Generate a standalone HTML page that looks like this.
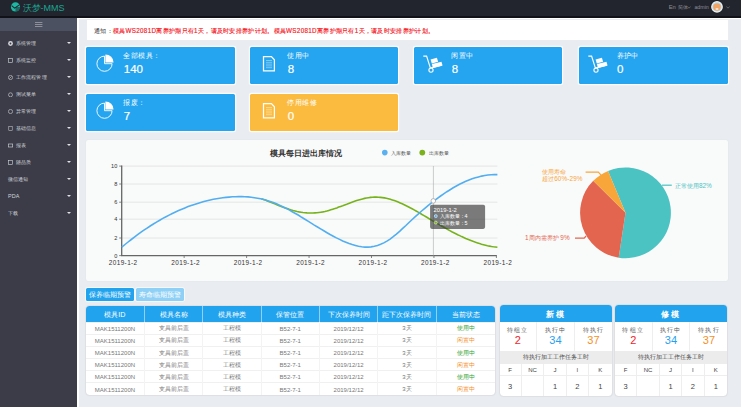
<!DOCTYPE html>
<html><head><meta charset="utf-8">
<style>
*{margin:0;padding:0;box-sizing:border-box;}
html,body{width:741px;height:407px;overflow:hidden;}
body{position:relative;background:#e9ecf0;font-family:"Liberation Sans",sans-serif;color:#333;}
.abs{position:absolute;}
#hdr{left:0;top:0;width:741px;height:15.8px;background:#23252e;}
#hdrline{left:0;top:15.8px;width:741px;height:1.8px;background:#111217;}
#side{left:0;top:17.6px;width:77px;height:390px;background:#3b3c48;}
#ham{left:0;top:17.6px;width:77px;height:13.3px;background:#4c5162;}
#wl{left:76.9px;top:17.6px;width:2.2px;height:390px;background:#fff;}
#wt{left:76.9px;top:17.6px;width:664.1px;height:1.9px;background:#fff;}
.mi{position:absolute;left:0;width:77px;height:17px;color:#d2d4da;font-size:5.4px;letter-spacing:0.15px;line-height:17px;}
.mi .ic{position:absolute;left:8px;top:5.5px;width:5px;height:5px;}
.mi .tx{position:absolute;left:15.8px;top:0;white-space:nowrap;}
.mi .ar{position:absolute;left:67.1px;top:7px;width:0;height:0;border-left:2.3px solid transparent;border-right:2.3px solid transparent;border-top:2.8px solid #e2e3e7;}
.card{position:absolute;width:149px;height:37.6px;background:#25a5ef;border-radius:1.5px;box-shadow:0 0 0 1.2px rgba(255,255,255,.92);color:#fff;}
.card .lb{position:absolute;left:37.3px;top:4.5px;font-size:7px;letter-spacing:0.45px;line-height:9px;white-space:nowrap;}
.card .nm{position:absolute;left:37.8px;top:15.7px;font-size:11.5px;line-height:14px;-webkit-text-stroke:0.2px #fff;}
.card svg{position:absolute;left:0;top:0;}
#notice{left:86.5px;top:20.4px;width:641.5px;height:19.6px;background:#fff;font-size:6.3px;letter-spacing:0.3px;line-height:21.5px;padding-left:7.5px;white-space:nowrap;overflow:hidden;color:#333;}
#notice span{color:#f5161e;-webkit-text-stroke:0.15px #f5161e;}
#chart{left:86.4px;top:140px;width:641.2px;height:140.6px;background:#f9fafa;border-radius:2px;box-shadow:0 0 1.5px rgba(0,0,0,.08);}
.btn{position:absolute;top:288.2px;height:13.1px;font-size:6.8px;line-height:13px;color:#fff;text-align:center;border-radius:1.5px;box-shadow:0 0 0 0.8px rgba(255,255,255,.8);}
#tbl{left:86px;top:305.5px;width:408.6px;height:89.9px;background:#fff;border-radius:3.5px;overflow:hidden;box-shadow:0 0 1.5px rgba(0,0,0,.25);}
#tbl table{border-collapse:collapse;width:100%;table-layout:fixed;}
#tbl th{height:16.8px;padding-top:2.2px;background:#22a3ee;color:#fff;font-weight:normal;font-size:7.2px;border-right:1px solid rgba(255,255,255,.5);}
#tbl td{height:12.1px;padding-top:1px;font-size:6px;color:#777;text-align:center;border-top:0.7px solid #f0f0f0;border-right:0.7px solid #f3f3f3;}
#tbl th:last-child,#tbl td:last-child{border-right:none;}
.g{color:#2ea12e !important;} .o{color:#f5902a !important;}
.pnl{position:absolute;top:304.8px;width:112px;height:91.2px;background:#fff;border-radius:3.5px;overflow:hidden;box-shadow:0 0 1.5px rgba(0,0,0,.25);}
.pnl .ph{position:absolute;left:0;top:0;width:100%;height:17px;background:#22a3ee;color:#fff;font-weight:bold;font-size:8px;line-height:19px;text-align:center;letter-spacing:2px;}
.pnl .c3{position:absolute;top:17px;height:29px;width:37.6px;text-align:center;}
.pnl .c3 .l{font-size:6px;color:#555;letter-spacing:1.2px;margin-top:4px;line-height:8px;}
.pnl .c3 .n{font-size:11px;line-height:13px;}
.pnl .gray{position:absolute;left:0;top:46.2px;width:100%;height:13.2px;background:#ececec;font-size:6px;line-height:13px;text-align:center;color:#444;}
.pnl .c5{position:absolute;width:22.4px;text-align:center;font-size:6px;color:#444;}
</style></head>
<body>
<div id="hdr" class="abs"></div>
<div id="hdrline" class="abs"></div>
<!-- logo -->
<svg class="abs" style="left:0;top:0" width="24" height="16" viewBox="0 0 24 16">
<circle cx="15.5" cy="6.9" r="4.6" fill="#1cb8a3"/>
<path d="M15.5 6.9 L20.1 6.9 A4.6 4.6 0 0 1 15.5 11.5 Z" fill="#23252e" opacity=".55"/>
<path d="M11.6 5.6 L14.6 8.1 L19.4 4.9" stroke="#23252e" stroke-width="1.1" fill="none"/>
</svg>
<div class="abs" style="left:22.5px;top:2.5px;font-size:9px;line-height:10px;color:#1aa592;white-space:nowrap;">沃梦-MMS</div>
<!-- top right -->
<div class="abs" style="left:668.7px;top:3.4px;font-size:5.8px;line-height:8px;color:#8c8f96;white-space:nowrap;">En<span style="font-size:4.6px;margin-left:2.6px;">简体</span></div>
<svg class="abs" style="left:686.5px;top:5.6px" width="4" height="3"><path d="M0.4 0.5 L2 2.2 L3.6 0.5" stroke="#84878e" stroke-width="0.6" fill="none"/></svg>
<div class="abs" style="left:694.4px;top:3.4px;font-size:5.3px;line-height:8px;color:#8c8f96;">admin</div>
<svg class="abs" style="left:710px;top:0" width="14" height="14" viewBox="0 0 14 14">
<circle cx="7" cy="6.9" r="6.3" fill="#111"/>
<circle cx="7" cy="6.9" r="5.9" fill="#eef6fb"/>
<circle cx="7" cy="6.9" r="4.9" fill="#bfe0f4"/>
<ellipse cx="7" cy="7" rx="3.9" ry="3.7" fill="#f0a566"/>
<ellipse cx="7" cy="9" rx="1.6" ry="1.1" fill="#f7e6d6"/>
</svg>
<svg class="abs" style="left:725.5px;top:5.6px" width="4" height="3"><path d="M0.4 0.5 L2 2.2 L3.6 0.5" stroke="#84878e" stroke-width="0.6" fill="none"/></svg>

<div id="side" class="abs"></div>
<div id="ham" class="abs"></div>
<svg class="abs" style="left:35px;top:22px" width="8" height="5"><rect x="0" y="0" width="7.4" height="0.7" fill="#a9acb5"/><rect x="0" y="2" width="7.4" height="0.7" fill="#a9acb5"/><rect x="0" y="4" width="7.4" height="0.7" fill="#a9acb5"/></svg>

<div class="mi" style="top:35.2px"><svg class="ic" viewBox="0 0 5 5"><circle cx="2.5" cy="2.5" r="2.4" fill="#d5d7dc"/><circle cx="2.5" cy="2.5" r="0.9" fill="#3b3c48"/></svg><span class="tx">系统管理</span><i class="ar"></i></div>
<div class="mi" style="top:52.2px"><svg class="ic" viewBox="0 0 5 5"><rect x="0.4" y="0.4" width="4.2" height="4.2" stroke="#d5d7dc" stroke-width="0.6" fill="none"/></svg><span class="tx">系统监控</span><i class="ar"></i></div>
<div class="mi" style="top:69.2px"><svg class="ic" viewBox="0 0 5 5"><circle cx="2.5" cy="2.5" r="2.1" stroke="#d5d7dc" stroke-width="0.6" fill="none"/><path d="M1.5 3.5 L3.5 1.5" stroke="#d5d7dc" stroke-width="0.6"/></svg><span class="tx">工作流程管理</span><i class="ar"></i></div>
<div class="mi" style="top:86.2px"><svg class="ic" viewBox="0 0 5 5"><circle cx="2.5" cy="2.8" r="2" stroke="#d5d7dc" stroke-width="0.6" fill="none"/></svg><span class="tx">测试菜单</span><i class="ar"></i></div>
<div class="mi" style="top:103.2px"><svg class="ic" viewBox="0 0 5 5"><circle cx="2.5" cy="2.5" r="2.1" stroke="#d5d7dc" stroke-width="0.6" fill="none"/></svg><span class="tx">异常管理</span><i class="ar"></i></div>
<div class="mi" style="top:120.2px"><svg class="ic" viewBox="0 0 5 5"><rect x="0.8" y="0.4" width="3.4" height="4.2" stroke="#d5d7dc" stroke-width="0.5" fill="none"/></svg><span class="tx">基础信息</span><i class="ar"></i></div>
<div class="mi" style="top:137.2px"><svg class="ic" viewBox="0 0 5 5"><rect x="0.3" y="1" width="4.4" height="3" stroke="#d5d7dc" stroke-width="0.6" fill="none"/></svg><span class="tx">报表</span><i class="ar"></i></div>
<div class="mi" style="top:154.2px"><svg class="ic" viewBox="0 0 5 5"><rect x="0.6" y="0.6" width="3.8" height="3.8" stroke="#d5d7dc" stroke-width="0.6" fill="none"/></svg><span class="tx">随品质</span><i class="ar"></i></div>
<div class="mi" style="top:171.2px"><span class="tx" style="left:8px">微信通知</span><i class="ar"></i></div>
<div class="mi" style="top:188.2px"><span class="tx" style="left:8px">PDA</span><i class="ar"></i></div>
<div class="mi" style="top:205.2px"><span class="tx" style="left:8px">下载</span><i class="ar"></i></div>

<div id="wl" class="abs"></div>
<div id="wt" class="abs"></div>

<div id="notice" class="abs">通知：<span>模具WS2081D离养护期只有1天，请及时安排养护计划。模具WS2081D离养护期只有1天，请及时安排养护计划。</span></div>

<!-- cards -->
<div class="card" style="left:86px;top:46.5px;">
<svg width="40" height="38"><path d="M104.5 55.6 A7.6 7.6 0 1 0 112.1 63.2 L104.5 63.2 Z" transform="translate(-86,-46.5)" stroke="#fff" stroke-width="0.9" fill="none"/><path d="M105.4 53.9 A8.2 8.2 0 0 1 113.6 62.1 L105.4 62.1 Z" transform="translate(-86,-46.5)" fill="#fff"/></svg>
<div class="lb">全部模具：</div><div class="nm">140</div></div>
<div class="card" style="left:250px;top:46.5px;width:148.4px;">
<svg width="40" height="38"><g transform="translate(-250,-46.5)"><path d="M263.5 56.1 L271.4 56.1 L274.4 59.3 L274.4 70.4 L263.5 70.4 Z" stroke="#fff" stroke-width="1.25" fill="none"/><path d="M266 60 H272 M266 61.8 H272 M266 63.6 H272 M266 65.4 H272 M266 67.2 H272" stroke="#fff" stroke-width="0.5" opacity=".8"/></g></svg>
<div class="lb">使用中</div><div class="nm">8</div></div>
<div class="card" style="left:414px;top:46.5px;width:148.4px;">
<svg width="40" height="38"><g transform="translate(-414,-46.5)"><path d="M423.3 55.6 H426.6 L430.4 67.6 L442 64.6" stroke="#fff" stroke-width="1.15" fill="none"/><circle cx="431" cy="69.6" r="2.1" stroke="#fff" stroke-width="1.1" fill="none"/><path d="M430.6 58.9 L436.9 57.3 L438.1 61.3 L431.8 63 Z" fill="#fff"/><path d="M431.9 63.6 L441.5 61.2 L442.5 65 L432.9 67.4 Z" fill="#fff"/></g></svg>
<div class="lb">闲置中</div><div class="nm">8</div></div>
<div class="card" style="left:579.3px;top:46.5px;width:148.7px;">
<svg width="40" height="38"><g transform="translate(-414,-46.5)"><path d="M423.3 55.6 H426.6 L430.4 67.6 L442 64.6" stroke="#fff" stroke-width="1.15" fill="none"/><circle cx="431" cy="69.6" r="2.1" stroke="#fff" stroke-width="1.1" fill="none"/><path d="M430.6 58.9 L436.9 57.3 L438.1 61.3 L431.8 63 Z" fill="#fff"/><path d="M431.9 63.6 L441.5 61.2 L442.5 65 L432.9 67.4 Z" fill="#fff"/></g></svg>
<div class="lb">养护中</div><div class="nm">0</div></div>
<div class="card" style="left:86px;top:93.6px;">
<svg width="40" height="38"><path d="M104.5 55.6 A7.6 7.6 0 1 0 112.1 63.2 L104.5 63.2 Z" transform="translate(-86,-46.5)" stroke="#fff" stroke-width="0.9" fill="none"/><path d="M105.4 53.9 A8.2 8.2 0 0 1 113.6 62.1 L105.4 62.1 Z" transform="translate(-86,-46.5)" fill="#fff"/></svg>
<div class="lb">报废：</div><div class="nm">7</div></div>
<div class="card" style="left:250px;top:93.6px;width:148.4px;background:#fbbb3f;">
<svg width="40" height="38"><g transform="translate(-250,-46.5)"><path d="M263.5 56.1 L271.4 56.1 L274.4 59.3 L274.4 70.4 L263.5 70.4 Z" stroke="#fff" stroke-width="1.25" fill="none"/><path d="M266 60 H272 M266 61.8 H272 M266 63.6 H272 M266 65.4 H272 M266 67.2 H272" stroke="#fff" stroke-width="0.5" opacity=".8"/></g></svg>
<div class="lb">停用维修</div><div class="nm">0</div></div>

<div id="chart" class="abs"></div>
<svg class="abs" style="left:0;top:0" width="741" height="407" viewBox="0 0 741 407" font-family="Liberation Sans, sans-serif">
<text x="306" y="155.8" font-size="7.9" font-weight="bold" fill="#333" text-anchor="middle">模具每日进出库情况</text>
<circle cx="384.8" cy="152.6" r="2.8" fill="#5ab1ef"/><text x="390.6" y="154.9" font-size="5.4" fill="#555">入库数量</text>
<circle cx="422.3" cy="152.6" r="2.9" fill="#7bb21c"/><text x="428.9" y="154.9" font-size="5.4" fill="#555">出库数量</text>
<g stroke="#e0e0e0" stroke-width="0.8">
<path d="M121.7 166.1 H497.4 M121.7 184 H497.4 M121.7 202.2 H497.4 M121.7 219.2 H497.4 M121.7 238 H497.4"/>
</g>
<path d="M121.7 165.6 V255.7 H496.8" stroke="#666" stroke-width="1.3" fill="none"/>
<g stroke="#666" stroke-width="0.8">
<path d="M119.2 166.1 H121.7 M119.2 184 H121.7 M119.2 202.2 H121.7 M119.2 219.2 H121.7 M119.2 238 H121.7 M119.2 255.6 H121.7"/>
<path d="M184.15 255.6 V258 M246.6 255.6 V258 M309.05 255.6 V258 M371.5 255.6 V258 M433.95 255.6 V258 M496.4 255.6 V258"/>
</g>
<g font-size="5.6" fill="#333" text-anchor="end"><text x="117.3" y="168.1">10</text><text x="117.3" y="186.0">8</text><text x="117.3" y="204.2">6</text><text x="117.3" y="221.2">4</text><text x="117.3" y="240.0">2</text><text x="117.3" y="257.6">0</text></g>
<g font-size="6.4" fill="#333" text-anchor="middle" letter-spacing="0.4"><text x="123.2" y="264.6">2019-1-2</text><text x="185.7" y="264.6">2019-1-2</text><text x="248.1" y="264.6">2019-1-2</text><text x="310.6" y="264.6">2019-1-2</text><text x="373.0" y="264.6">2019-1-2</text><text x="435.4" y="264.6">2019-1-2</text><text x="497.9" y="264.6">2019-1-2</text></g>
<path d="M433.4 166 V255.6" stroke="#aaa" stroke-width="0.6"/>
<path d="M261.4 198.7 L263.4 199.4 L265.4 200.1 L267.3 200.9 L269.3 201.7 L271.3 202.5 L273.3 203.3 L275.3 204.1 L277.3 204.9 L279.2 205.7 L281.2 206.5 L283.2 207.2 L285.2 207.9 L287.2 208.6 L289.2 209.3 L291.1 209.9 L293.1 210.5 L295.1 211.0 L297.1 211.5 L299.1 211.9 L301.1 212.2 L303.0 212.5 L305.0 212.7 L307.0 212.9 L309.0 213.0 L311.0 213.0 L313.0 213.0 L314.9 212.9 L316.9 212.8 L318.9 212.5 L320.9 212.2 L322.9 211.9 L324.9 211.5 L326.8 211.0 L328.8 210.4 L330.8 209.8 L332.8 209.2 L334.8 208.6 L336.8 207.9 L338.7 207.1 L340.7 206.4 L342.7 205.7 L344.7 204.9 L346.7 204.2 L348.7 203.4 L350.6 202.7 L352.6 202.0 L354.6 201.3 L356.6 200.6 L358.6 200.0 L360.6 199.4 L362.5 198.9 L364.5 198.4 L366.5 198.0 L368.5 197.7 L370.5 197.4 L372.5 197.2 L374.4 197.1 L376.4 197.1 L378.4 197.2 L380.4 197.4 L382.4 197.6 L384.4 197.9 L386.3 198.3 L388.3 198.8 L390.3 199.3 L392.3 199.9 L394.3 200.6 L396.3 201.3 L398.2 202.1 L400.2 202.9 L402.2 203.8 L404.2 204.7 L406.2 205.7 L408.2 206.7 L410.1 207.7 L412.1 208.8 L414.1 209.9 L416.1 211.0 L418.1 212.1 L420.1 213.3 L422.0 214.5 L424.0 215.6 L426.0 216.8 L428.0 218.0 L430.0 219.2 L432.0 220.4 L433.9 221.6 L435.9 222.7 L437.9 223.9 L439.9 225.1 L441.9 226.2 L443.9 227.3 L445.8 228.4 L447.8 229.5 L449.8 230.6 L451.8 231.7 L453.8 232.7 L455.8 233.7 L457.7 234.7 L459.7 235.6 L461.7 236.6 L463.7 237.5 L465.7 238.4 L467.7 239.2 L469.6 240.0 L471.6 240.8 L473.6 241.6 L475.6 242.3 L477.6 242.9 L479.6 243.6 L481.5 244.2 L483.5 244.7 L485.5 245.2 L487.5 245.7 L489.5 246.1 L491.5 246.5 L493.4 246.8 L495.4 247.0 L497.4 247.2" stroke="#76b31b" stroke-width="1.6" fill="none"/>
<path d="M121.8 247.2 L125.0 244.5 L128.1 242.0 L131.3 239.5 L134.4 237.1 L137.6 234.7 L140.7 232.4 L143.9 230.2 L147.1 228.1 L150.2 226.0 L153.4 224.0 L156.5 222.1 L159.7 220.2 L162.8 218.4 L166.0 216.7 L169.1 215.1 L172.3 213.5 L175.5 212.0 L178.6 210.5 L181.8 209.2 L184.9 207.9 L188.1 206.6 L191.2 205.5 L194.4 204.4 L197.6 203.4 L200.7 202.4 L203.9 201.5 L207.0 200.7 L210.2 200.0 L213.3 199.3 L216.5 198.7 L219.6 198.2 L222.8 197.8 L226.0 197.4 L229.1 197.1 L232.3 196.8 L235.4 196.7 L238.6 196.6 L241.7 196.6 L244.9 196.7 L248.1 196.9 L251.2 197.3 L254.4 197.7 L257.5 198.2 L260.7 198.8 L263.8 199.6 L267.0 200.4 L270.1 201.4 L273.3 202.6 L276.5 203.8 L279.6 205.2 L282.8 206.7 L285.9 208.2 L289.1 209.9 L292.2 211.7 L295.4 213.5 L298.6 215.3 L301.7 217.3 L304.9 219.2 L308.0 221.1 L311.2 223.1 L314.3 225.1 L317.5 227.0 L320.6 228.9 L323.8 230.8 L327.0 232.7 L330.1 234.5 L333.3 236.2 L336.4 237.9 L339.6 239.4 L342.7 240.9 L345.9 242.2 L349.1 243.5 L352.2 244.6 L355.4 245.5 L358.5 246.3 L361.7 246.8 L364.8 247.1 L368.0 247.1 L371.1 246.9 L374.3 246.3 L377.5 245.5 L380.6 244.3 L383.8 242.9 L386.9 241.1 L390.1 239.1 L393.2 236.7 L396.4 234.1 L399.6 231.3 L402.7 228.4 L405.9 225.5 L409.0 222.5 L412.2 219.5 L415.3 216.6 L418.5 213.8 L421.6 211.0 L424.8 208.3 L428.0 205.7 L431.1 203.2 L434.3 200.7 L437.4 198.3 L440.6 196.0 L443.7 193.8 L446.9 191.7 L450.1 189.7 L453.2 187.8 L456.4 186.0 L459.5 184.3 L462.7 182.7 L465.8 181.3 L469.0 180.0 L472.1 178.8 L475.3 177.8 L478.5 176.9 L481.6 176.1 L484.8 175.5 L487.9 175.0 L491.1 174.7 L494.2 174.6 L497.4 174.6" stroke="#52aef0" stroke-width="1.6" fill="none"/>
<circle cx="433.3" cy="200.9" r="2.3" fill="#fff" stroke="#999" stroke-width="0.7"/>
<rect x="430.1" y="204.7" width="55" height="24.2" rx="1.8" fill="rgba(50,50,50,0.64)"/>
<g font-size="5.8" fill="#fff">
<text x="433.6" y="211.9">2019-1-2</text>
<circle cx="435.8" cy="216.1" r="1.5" fill="#5ab1ef" stroke="#fff" stroke-width="0.5"/><text x="439.6" y="218.2" font-size="5.4">入库数量：4</text>
<circle cx="435.8" cy="222.6" r="1.5" fill="#7bb21c" stroke="#fff" stroke-width="0.5"/><text x="439.6" y="224.7" font-size="5.4">出库数量：5</text>
</g>
<!-- pie -->
<g transform="translate(625.5,212.8)">
<path d="M0 0 L-17.45 -41.91 A45.4 45.4 0 1 1 -6.79 44.89 Z" fill="#4cc3c3"/><path d="M0 0 L-6.79 44.89 A45.4 45.4 0 0 1 -32.27 -31.93 Z" fill="#e3654f"/><path d="M0 0 L-32.27 -31.93 A45.4 45.4 0 0 1 -17.45 -41.91 Z" fill="#f8a63a"/>
</g>
<path d="M662 185.2 H671.8" stroke="#4cc3c3" stroke-width="1.2"/>
<text x="675" y="187.6" font-size="6.4" fill="#4cc3c3">正常使用82%</text>
<path d="M585.6 172.1 H598.3 L601.1 175.2" stroke="#f8a63a" stroke-width="1.2" fill="none"/>
<text x="542" y="174.4" font-size="6.4" fill="#f8a63a">使用寿命</text>
<text x="542" y="181" font-size="6.4" fill="#f8a63a" letter-spacing="0.1">超过60%-29%</text>
<path d="M575 238.1 H584.2 L586.1 236" stroke="#e3654f" stroke-width="1.2" fill="none"/>
<text x="525" y="239.7" font-size="6.4" fill="#e3654f">1周内需养护 9%</text>
</svg>


<div class="btn" style="left:85.7px;width:48px;background:#22a3ee;">保养临期预警</div>
<div class="btn" style="left:136.2px;width:47.8px;background:#8fd1f6;">寿命临期预警</div>

<div id="tbl" class="abs"><table>
<tr><th>模具ID</th><th>模具名称</th><th>模具种类</th><th>保管位置</th><th>下次保养时间</th><th>距下次保养时间</th><th>当前状态</th></tr>
<tr><td>MAK1511200N</td><td>支具前后盖</td><td>工程模</td><td>B52-7-1</td><td>2019/12/12</td><td>3天</td><td class="g">使用中</td></tr>
<tr><td>MAK1511200N</td><td>支具前后盖</td><td>工程模</td><td>B52-7-1</td><td>2019/12/12</td><td>3天</td><td class="o">闲置中</td></tr>
<tr><td>MAK1511200N</td><td>支具前后盖</td><td>工程模</td><td>B52-7-1</td><td>2019/12/12</td><td>3天</td><td class="g">使用中</td></tr>
<tr><td>MAK1511200N</td><td>支具前后盖</td><td>工程模</td><td>B52-7-1</td><td>2019/12/12</td><td>3天</td><td class="o">闲置中</td></tr>
<tr><td>MAK1511200N</td><td>支具前后盖</td><td>工程模</td><td>B52-7-1</td><td>2019/12/12</td><td>3天</td><td class="g">使用中</td></tr>
<tr><td>MAK1511200N</td><td>支具前后盖</td><td>工程模</td><td>B52-7-1</td><td>2019/12/12</td><td>3天</td><td class="o">闲置中</td></tr>
</table></div>

<div class="pnl" style="left:499.5px"><div class="ph">新模</div><div class="c3" style="left:0.0px;border-right:0.7px solid #eee;"><div class="l">待组立</div><div class="n" style="color:#f0242b">2</div></div><div class="c3" style="left:37.6px;border-right:0.7px solid #eee;"><div class="l">执行中</div><div class="n" style="color:#2a9ff0">34</div></div><div class="c3" style="left:75.2px;"><div class="l">待执行</div><div class="n" style="color:#f5902a">37</div></div><div class="gray">待执行加工工作任务工时</div><div class="c5" style="left:0.0px;top:59.4px;height:11.3px;line-height:13px;border-right:0.7px solid #eee;">F</div><div class="c5" style="left:0.0px;top:70.7px;height:20.5px;line-height:21.5px;font-size:7.5px;border-top:0.7px solid #eee;border-right:0.7px solid #eee;">3</div><div class="c5" style="left:22.4px;top:59.4px;height:11.3px;line-height:13px;border-right:0.7px solid #eee;">NC</div><div class="c5" style="left:22.4px;top:70.7px;height:20.5px;line-height:21.5px;font-size:7.5px;border-top:0.7px solid #eee;border-right:0.7px solid #eee;"></div><div class="c5" style="left:44.8px;top:59.4px;height:11.3px;line-height:13px;border-right:0.7px solid #eee;">J</div><div class="c5" style="left:44.8px;top:70.7px;height:20.5px;line-height:21.5px;font-size:7.5px;border-top:0.7px solid #eee;border-right:0.7px solid #eee;">1</div><div class="c5" style="left:67.2px;top:59.4px;height:11.3px;line-height:13px;border-right:0.7px solid #eee;">I</div><div class="c5" style="left:67.2px;top:70.7px;height:20.5px;line-height:21.5px;font-size:7.5px;border-top:0.7px solid #eee;border-right:0.7px solid #eee;">2</div><div class="c5" style="left:89.6px;top:59.4px;height:11.3px;line-height:13px;">K</div><div class="c5" style="left:89.6px;top:70.7px;height:20.5px;line-height:21.5px;font-size:7.5px;border-top:0.7px solid #eee;">1</div></div>
<div class="pnl" style="left:615.0px"><div class="ph">修模</div><div class="c3" style="left:0.0px;border-right:0.7px solid #eee;"><div class="l">待组立</div><div class="n" style="color:#f0242b">2</div></div><div class="c3" style="left:37.6px;border-right:0.7px solid #eee;"><div class="l">执行中</div><div class="n" style="color:#2a9ff0">34</div></div><div class="c3" style="left:75.2px;"><div class="l">待执行</div><div class="n" style="color:#f5902a">37</div></div><div class="gray">待执行加工工作任务工时</div><div class="c5" style="left:0.0px;top:59.4px;height:11.3px;line-height:13px;border-right:0.7px solid #eee;">F</div><div class="c5" style="left:0.0px;top:70.7px;height:20.5px;line-height:21.5px;font-size:7.5px;border-top:0.7px solid #eee;border-right:0.7px solid #eee;">3</div><div class="c5" style="left:22.4px;top:59.4px;height:11.3px;line-height:13px;border-right:0.7px solid #eee;">NC</div><div class="c5" style="left:22.4px;top:70.7px;height:20.5px;line-height:21.5px;font-size:7.5px;border-top:0.7px solid #eee;border-right:0.7px solid #eee;"></div><div class="c5" style="left:44.8px;top:59.4px;height:11.3px;line-height:13px;border-right:0.7px solid #eee;">J</div><div class="c5" style="left:44.8px;top:70.7px;height:20.5px;line-height:21.5px;font-size:7.5px;border-top:0.7px solid #eee;border-right:0.7px solid #eee;">1</div><div class="c5" style="left:67.2px;top:59.4px;height:11.3px;line-height:13px;border-right:0.7px solid #eee;">I</div><div class="c5" style="left:67.2px;top:70.7px;height:20.5px;line-height:21.5px;font-size:7.5px;border-top:0.7px solid #eee;border-right:0.7px solid #eee;">2</div><div class="c5" style="left:89.6px;top:59.4px;height:11.3px;line-height:13px;">K</div><div class="c5" style="left:89.6px;top:70.7px;height:20.5px;line-height:21.5px;font-size:7.5px;border-top:0.7px solid #eee;">1</div></div>

</body></html>
